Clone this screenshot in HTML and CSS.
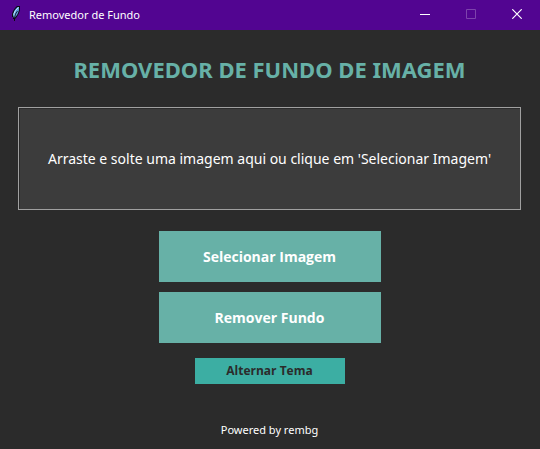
FILE: index.html
```html
<!DOCTYPE html>
<html lang="pt-BR">
<head>
<meta charset="utf-8">
<meta name="viewport" content="width=device-width, initial-scale=1">
<title>Removedor de Fundo</title>
<link rel="stylesheet" href="styles.css">
</head>
<body>
<header class="titlebar">
  <svg class="feather" viewBox="0 0 16 16" aria-hidden="true">
    <path d="M9 0h3v4l-1 3-1 2-2 3-1 1v2H6v-2H5v-2H4V8l1-3 2-3z" fill="#0a0a12"/>
    <path d="M9.500 1H11v3l-1 3-1 2-2 2.500-1 .5-.8-2V8l1-3 1.800-2.500z" fill="#5c9fe0"/>
    <path d="M10.500 1.500L7.500 4.500 6 7.500v2" fill="none" stroke="#c4ecff"/>
    <path d="M9.500 5L7.500 8 6.500 12v2.500" fill="none" stroke="#0a0a12" stroke-width=".8"/>
  </svg>
  <span class="window-title">Removedor de Fundo</span>
  <div class="window-controls">
    <button class="control" type="button" aria-label="Minimizar">
      <svg viewBox="0 0 10 10" aria-hidden="true"><path d="M0 5.500h10"/></svg>
    </button>
    <button class="control" type="button" aria-label="Maximizar" disabled>
      <svg viewBox="0 0 10 10" aria-hidden="true"><path d="M.5 .5h9v9h-9z"/></svg>
    </button>
    <button class="control" type="button" aria-label="Fechar">
      <svg viewBox="0 0 10 10" aria-hidden="true"><path class="cross" d="M.3 .3l9.400 9.400M9.700 .3L.3 9.700"/></svg>
    </button>
  </div>
</header>
<main class="content">
  <h1 class="heading">REMOVEDOR DE FUNDO DE IMAGEM</h1>
  <div class="dropzone">Arraste e solte uma imagem aqui ou clique em 'Selecionar Imagem'</div>
  <div class="actions">
    <button class="action" type="button">Selecionar Imagem</button>
    <button class="action" type="button">Remover Fundo</button>
  </div>
  <button class="theme" type="button">Alternar Tema</button>
  <p class="credit">Powered by rembg</p>
</main>
</body>
</html>
```
FILE: styles.css
```css
* {
  box-sizing: border-box;
}

body {
  margin: 0;
  min-height: 100vh;
  background: #2b2b2b;
  color: #fff;
  font-family: "Noto Sans", "Open Sans", sans-serif;
}

button {
  border: 0;
  font-family: "Open Sans", "Noto Sans", sans-serif;
}

.titlebar {
  display: flex;
  align-items: center;
  height: 30px;
  padding: 0 0 2px 8px;
  background: #520591;
}

.feather {
  width: 16px;
  height: 16px;
}

.window-title {
  margin-left: 5px;
  padding-top: 2px;
  font-size: 11px;
  line-height: 16px;
}

.window-controls {
  display: flex;
  align-self: stretch;
  margin-left: auto;
}

.control {
  display: flex;
  align-items: center;
  justify-content: center;
  width: 46px;
  padding: 0;
  background: none;
}

.control svg {
  width: 10px;
  height: 10px;
  fill: none;
  stroke: #fff;
}

.control:disabled svg {
  stroke: #7d43ac;
}

.control .cross {
  stroke-width: 1.200px;
}

.content {
  display: flex;
  flex-direction: column;
  align-items: center;
  padding: 23px 19px 10px 18px;
}

.heading {
  margin: 0;
  color: #67b1a7;
  font-size: 22px;
  font-weight: 700;
  line-height: 32px;
  white-space: nowrap;
}

.dropzone {
  display: flex;
  align-items: center;
  justify-content: center;
  align-self: stretch;
  min-height: 103px;
  margin-top: 22px;
  border: 1px solid #a0a0a0;
  background: #3c3c3c;
  box-shadow: inset 1px 1px #2b2b2b;
  font-size: 14px;
  line-height: 20px;
}

.actions {
  display: grid;
  gap: 10px;
  margin-top: 21px;
}

.action {
  width: 222px;
  height: 51px;
  padding: 0;
  background: #67b1a7;
  color: #fff;
  font-size: 14px;
  font-weight: 700;
  line-height: 20px;
}

.theme {
  width: 150px;
  height: 26px;
  margin-top: 15px;
  padding: 0;
  background: #3caea3;
  color: #2b2b2b;
  font-size: 12px;
  font-weight: 700;
  line-height: 20px;
}

.credit {
  margin: 37px 0 0;
  font-size: 11px;
  line-height: 18px;
}
```
